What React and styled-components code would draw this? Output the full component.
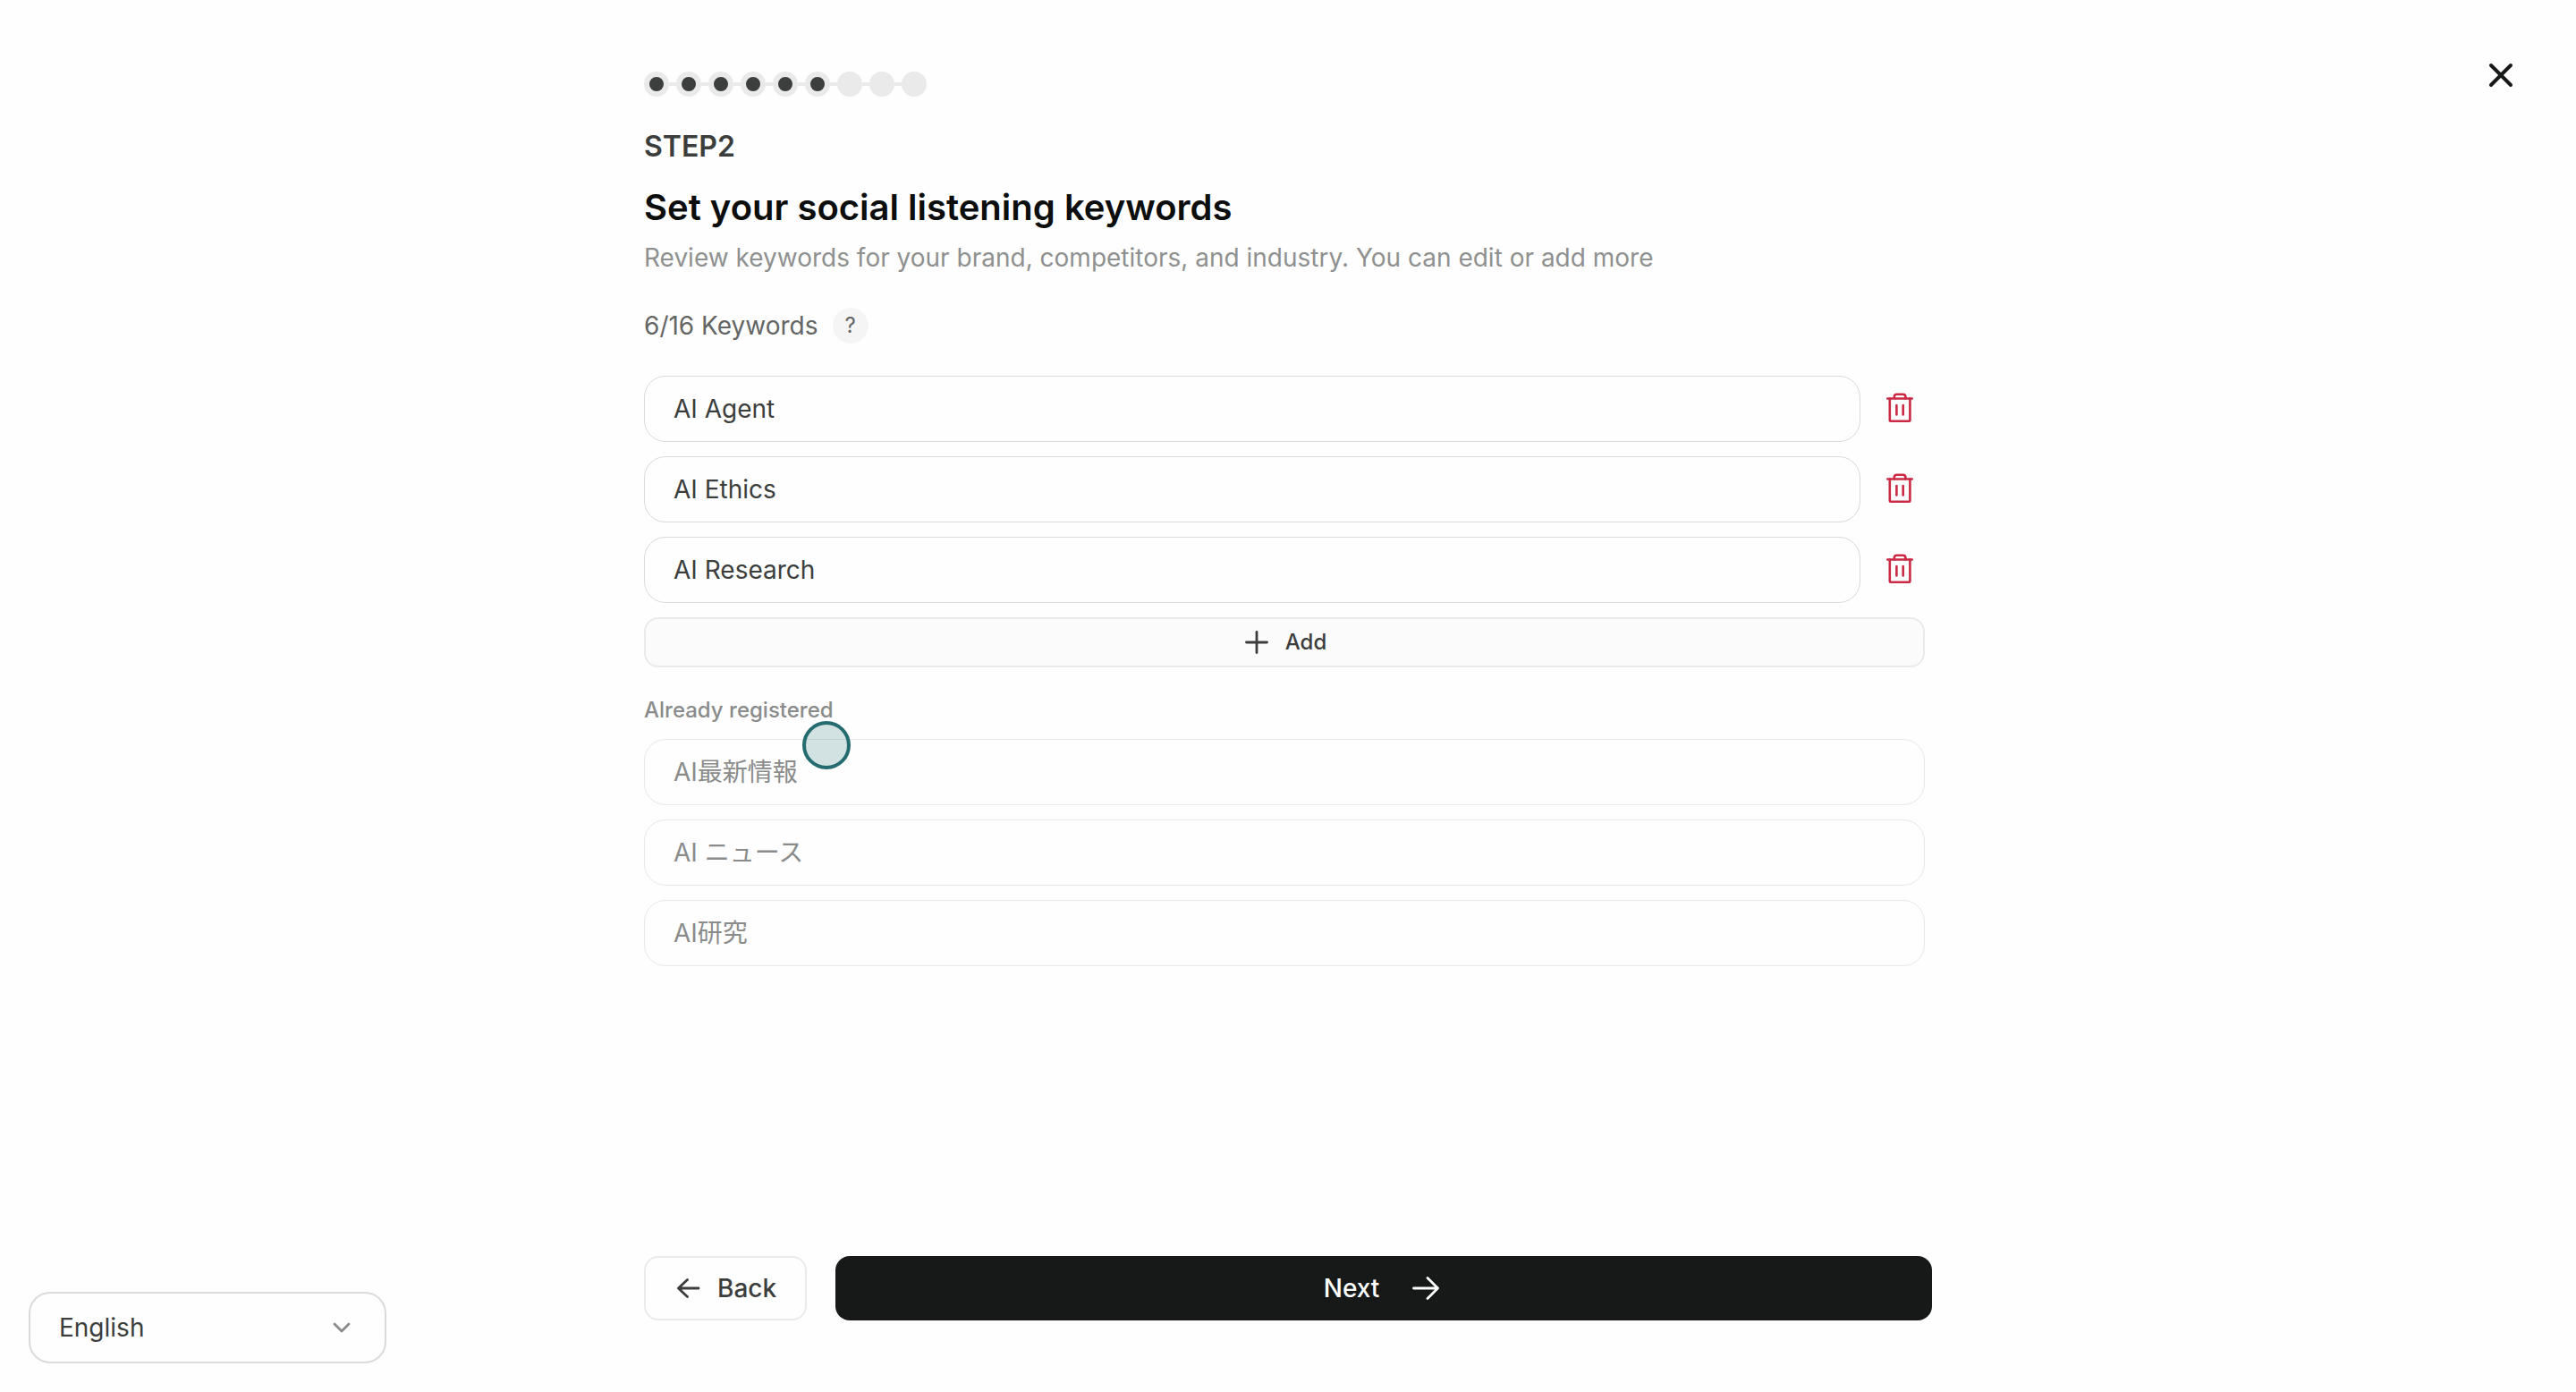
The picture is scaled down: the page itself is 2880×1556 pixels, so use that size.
import React, { useState } from 'react';

// 3rd PARTY PACKAGES
import styled, { createGlobalStyle } from 'styled-components';

const TOTAL_STEPS = 9;
const CURRENT_STEP = 6;
const MAX_KEYWORDS = 16;

const INITIAL_KEYWORDS = [
  { id: 1, value: 'AI Agent' },
  { id: 2, value: 'AI Ethics' },
  { id: 3, value: 'AI Research' }
];

const REGISTERED = ['AI最新情報', 'AI ニュース', 'AI研究'];

const GlobalStyle = createGlobalStyle`
  * {
    box-sizing: border-box;
  }

  body {
    margin: 0;
    background-color: #fefefe;
    color: #3c3d3d;
    font-family: Inter, 'Noto Sans CJK JP', sans-serif;
    font-size: 28px;
    line-height: 40px;
  }

  button,
  input,
  select {
    margin: 0;
    font: inherit;
    color: inherit;
  }

  button {
    cursor: pointer;
  }

  svg {
    display: block;
    flex: none;
  }
`;

const Page = styled.div`
  display: flex;
  flex-direction: column;
  min-height: 100vh;
`;

const Main = styled.main`
  display: flex;
  flex: 1;
  flex-direction: column;
  width: 100%;
  max-width: 1440px;
  margin: 0 auto;
  padding: 80px 0;
`;

const Content = styled.div`
  padding-right: 8px;
`;

const Steps = styled.ol`
  display: flex;
  margin: 0;
  padding: 0;
  list-style: none;
`;

const Step = styled.li`
  display: flex;
  align-items: center;

  & + &::before {
    content: '';
    width: 8px;
    height: 4px;
    background-color: #eaeaea;
  }
`;

const StepDot = styled.span`
  width: 28px;
  height: 28px;
  border: 6px solid #eaeaea;
  border-radius: 50%;
  background-color: ${({ $done }) => ($done ? '#3c3d3d' : '#eaeaea')};
`;

const StepName = styled.p`
  margin: 36px 0 24px;
  font-size: 32px;
  font-weight: 600;
`;

const Title = styled.h1`
  margin: 0 0 12px;
  color: #0c0d0d;
  font-size: 40px;
  font-weight: 600;
  line-height: 48px;
`;

const Description = styled.p`
  margin: 0;
  color: #8f9090;
`;

const CountRow = styled.div`
  display: flex;
  align-items: center;
  gap: 16px;
  margin: 36px 0;
  color: #646565;
`;

const HelpButton = styled.button`
  width: 40px;
  height: 40px;
  padding: 0;
  border: none;
  border-radius: 50%;
  background-color: #f5f5f5;
  font-size: 24px;
`;

const List = styled.ul`
  display: flex;
  flex-direction: column;
  gap: 16px;
  margin: 0;
  padding: 0;
  list-style: none;
`;

const Row = styled.li`
  display: flex;
  gap: 16px;
`;

const KeywordInput = styled.input`
  flex: 1;
  min-width: 0;
  height: 74px;
  padding: 0 32px;
  border: 1px solid #d9dada;
  border-radius: 24px;
  background-color: transparent;
  outline: none;

  &:disabled {
    padding-bottom: 4px;
    border-color: #e7e8e8;
    color: #8a8b8b;
  }
`;

const DeleteButton = styled.button`
  display: flex;
  align-items: center;
  justify-content: center;
  width: 56px;
  padding: 0;
  border: none;
  background: none;
  color: #cb2a44;
`;

const AddButton = styled.button`
  display: flex;
  align-items: center;
  justify-content: center;
  gap: 16px;
  width: 100%;
  height: 56px;
  margin-top: 16px;
  border: 2px solid #eaeaea;
  border-radius: 16px;
  background-color: #fbfbfb;
  font-size: 24px;
  font-weight: 500;
`;

const Registered = styled.section`
  position: relative;
  margin-top: 32px;
`;

const RegisteredTitle = styled.h2`
  margin: 0 0 16px;
  color: #8a8b8b;
  font-size: 24px;
  font-weight: 500;
  line-height: 32px;
`;

const Pointer = styled.span`
  position: absolute;
  top: 28px;
  left: 177px;
  width: 54px;
  height: 54px;
  border: 4px solid #246c70;
  border-radius: 50%;
  background-color: rgba(36, 108, 112, 0.2);
  pointer-events: none;
`;

const Footer = styled.footer`
  display: flex;
  gap: 32px;
  margin-top: auto;
`;

const FooterButton = styled.button`
  display: flex;
  align-items: center;
  justify-content: center;
  height: 72px;
  border-radius: 16px;
  font-weight: 500;
`;

const BackButton = styled(FooterButton)`
  gap: 16px;
  padding: 0 32px;
  border: 2px solid #eaeaea;
  background-color: transparent;
`;

const NextButton = styled(FooterButton)`
  flex: 1;
  gap: 32px;
  border: none;
  background-color: #171918;
  color: #fff;
`;

const CloseButton = styled.button`
  position: fixed;
  top: 64px;
  right: 64px;
  padding: 0;
  border: none;
  background: none;
  color: #171918;
`;

const Language = styled.div`
  position: fixed;
  bottom: 32px;
  left: 32px;
  width: 400px;
`;

const LanguageSelect = styled.select`
  width: 100%;
  height: 80px;
  padding: 0 32px;
  border: 2px solid #dadbdb;
  border-radius: 24px;
  background-color: #fefefe;
  appearance: none;
`;

const LanguageArrow = styled.span`
  position: absolute;
  top: 20px;
  right: 30px;
  color: #8a8b8b;
  pointer-events: none;
`;

const Icon = ({ size = 40, stroke = 2, children }) => (
  <svg
    width={size}
    height={size}
    viewBox={`0 0 ${size} ${size}`}
    fill="none"
    stroke="currentColor"
    strokeWidth={stroke}
    strokeLinecap="round"
    strokeLinejoin="round"
    aria-hidden="true"
  >
    {children}
  </svg>
);

const TrashIcon = () => (
  <Icon stroke={2.6}>
    <path d="M6.3 8.5h27.4" />
    <path d="M8.8 8.5v24c0 .8.4 1.2 1.2 1.2h20.2c.8 0 1.2-.4 1.2-1.2v-24" />
    <path d="M13.8 8.2V6.6c0-1.8 1-2.8 2.8-2.8h7c1.8 0 2.8 1 2.8 2.8v1.6" />
    <path d="M16.4 16v10.4M23.7 16v10.4" />
  </Icon>
);

const App = () => {
  const [keywords, setKeywords] = useState(INITIAL_KEYWORDS);

  const handleChange = (id, value) =>
    setKeywords(keywords.map(item => (item.id === id ? { id, value } : item)));

  const handleDelete = id =>
    setKeywords(keywords.filter(item => item.id !== id));

  const handleAdd = () =>
    setKeywords([...keywords, { id: Date.now(), value: '' }]);

  return (
    <Page>
      <GlobalStyle />
      <CloseButton aria-label="Close">
        <Icon stroke={4}>
          <path d="M9 9l22 22M31 9L9 31" />
        </Icon>
      </CloseButton>

      <Main>
        <Content>
          <Steps>
            {Array.from({ length: TOTAL_STEPS }, (_, index) => (
              <Step key={index}>
                <StepDot $done={index < CURRENT_STEP} />
              </Step>
            ))}
          </Steps>
          <StepName>STEP2</StepName>
          <Title>Set your social listening keywords</Title>
          <Description>
            Review keywords for your brand, competitors, and industry. You can
            edit or add more
          </Description>
          <CountRow>
            <span>
              {keywords.length + REGISTERED.length}/{MAX_KEYWORDS} Keywords
            </span>
            <HelpButton>?</HelpButton>
          </CountRow>

          <List>
            {keywords.map(({ id, value }) => (
              <Row key={id}>
                <KeywordInput
                  aria-label="Keyword"
                  value={value}
                  onChange={e => handleChange(id, e.target.value)}
                />
                <DeleteButton
                  aria-label="Delete keyword"
                  onClick={() => handleDelete(id)}
                >
                  <TrashIcon />
                </DeleteButton>
              </Row>
            ))}
          </List>
          <AddButton onClick={handleAdd}>
            <Icon size={32} stroke={2.8}>
              <path d="M4.5 16h23M16 4.5v23" />
            </Icon>
            Add
          </AddButton>

          <Registered>
            <RegisteredTitle>Already registered</RegisteredTitle>
            <List>
              {REGISTERED.map(keyword => (
                <Row key={keyword}>
                  <KeywordInput
                    aria-label="Registered keyword"
                    value={keyword}
                    disabled
                  />
                </Row>
              ))}
            </List>
            <Pointer />
          </Registered>
        </Content>

        <Footer>
          <BackButton>
            <Icon size={32} stroke={2.8}>
              <path d="M27 16H4.5M14.5 6.5L4.5 16l10 9.5" />
            </Icon>
            Back
          </BackButton>
          <NextButton>
            Next
            <Icon stroke={2.8}>
              <path d="M6.5 20h27M22 8.5L33.5 20 22 31.5" />
            </Icon>
          </NextButton>
        </Footer>
      </Main>

      <Language>
        <LanguageSelect aria-label="Language" defaultValue="en">
          <option value="en">English</option>
          <option value="ja">日本語</option>
        </LanguageSelect>
        <LanguageArrow>
          <Icon stroke={2.8}>
            <path d="M12 16l8 8 8-8" />
          </Icon>
        </LanguageArrow>
      </Language>
    </Page>
  );
};

export default App;
